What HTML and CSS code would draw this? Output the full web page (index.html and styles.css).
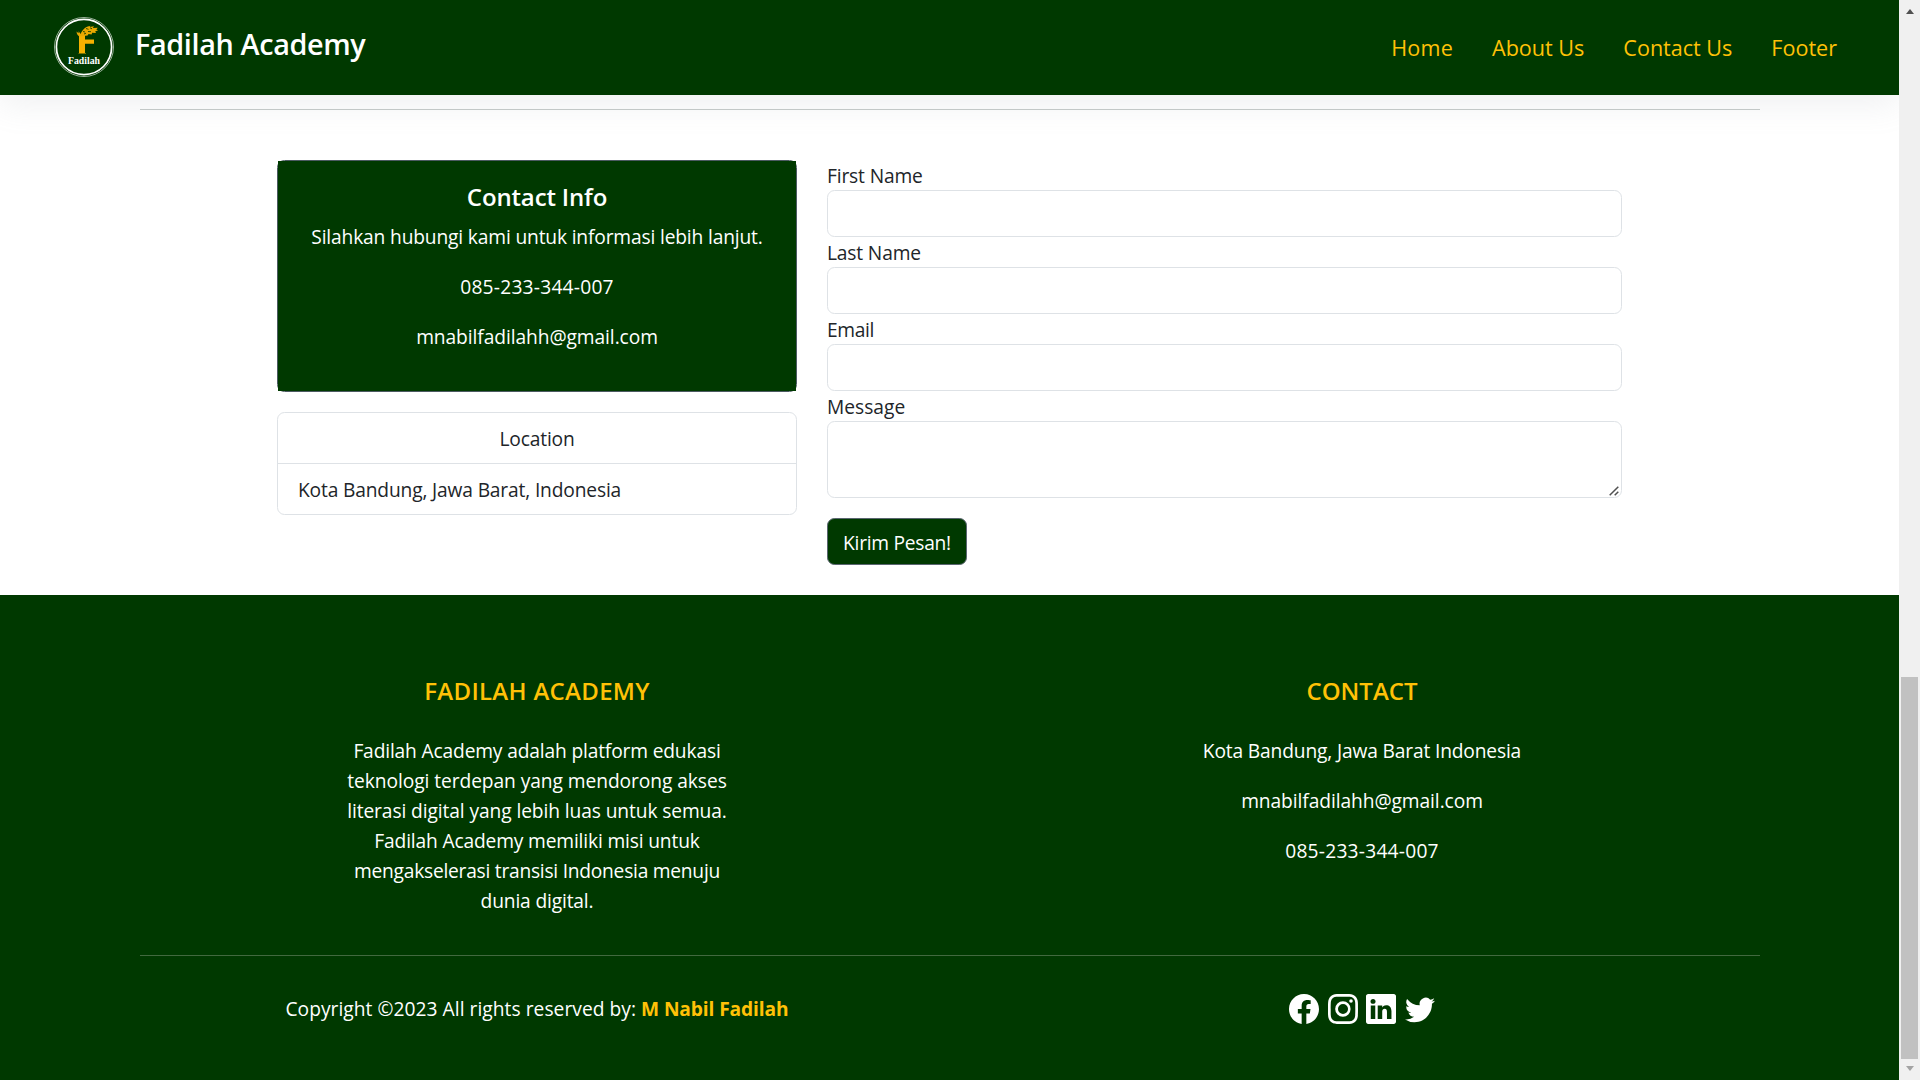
FILE: index.html
```html
<!DOCTYPE html>
<html lang="id">
<head>
<meta charset="utf-8">
<title>Fadilah Academy</title>
<link rel="stylesheet" href="styles.css">
</head>
<body>
<div class="page">
  <header class="navbar">
    <a class="brand">
      <svg class="brand-logo" viewBox="0 0 62 62" width="62" height="62">
        <circle cx="31" cy="31" r="29.500" fill="none" stroke="#fff" stroke-opacity=".6" stroke-width="1"/>
        <circle cx="31" cy="31" r="27.600" fill="none" stroke="#fff" stroke-width="1.700"/>
        <path d="M26 18.500h6v5h9v4.200h-9V37h1v.600h-7.500V37H26z" fill="#f5b000"/>
        <path d="M26.500 20.500c-1.500-1-2.800-2.300-3-5l2 1.700.200-2 1.800 2.800c2-4.500 5-7.500 10-8.300l-1 1.300 4.500-.800-1.200 1.800 5-.200-1.500 1.700 1.800.800-3 1.300 1 1.500-4-.300-.500 1.700-3-.500-1 1.600z" fill="#e9a800"/>
        <path d="M30 15.500l2 .500M33 12.500l2.500.800M37 11.800l2 1M35 15.500l3 .200M31 18l2-.800" stroke="#003900" stroke-width=".8"/>
        <text class="brand-logo-text" x="15" y="47.500" textLength="32" lengthAdjust="spacingAndGlyphs">Fadilah</text>
      </svg>
      <span class="brand-name">Fadilah Academy</span>
    </a>
    <nav class="nav">
      <a class="nav-home">Home</a><a>About Us</a><a>Contact Us</a><a>Footer</a>
    </nav>
  </header>

  <main class="contact">
    <hr class="rule">
    <div class="contact-grid">
      <div class="info">
        <section class="card card-dark">
          <div class="card-body">
            <h5 class="card-title">Contact Info</h5>
            <p>Silahkan hubungi kami untuk informasi lebih lanjut.</p>
            <p class="digits">085-233-344-007</p>
            <p class="mail">mnabilfadilahh@gmail.com</p>
          </div>
        </section>
        <ul class="card list">
          <li class="list-head">Location</li>
          <li>Kota Bandung, Jawa Barat, Indonesia</li>
        </ul>
      </div>
      <form class="form">
        <label for="first">First Name</label>
        <input id="first" type="text">
        <label for="last">Last Name</label>
        <input id="last" type="text">
        <label for="email" class="tight">Email</label>
        <input id="email" type="text">
        <label for="message" class="loose">Message</label>
        <div class="message-box">
          <textarea id="message"></textarea>
          <svg class="grip" viewBox="0 0 10 10" width="10" height="10"><path d="M.700 9.300L9.300.700M5.700 9.300L9.300 5.700" stroke="#505050" stroke-width="1.500"/></svg>
        </div>
        <button type="button">Kirim Pesan!</button>
      </form>
    </div>
  </main>

  <footer class="footer">
    <div class="footer-row footer-top">
      <div class="footer-col">
        <h5 class="wide">FADILAH ACADEMY</h5>
        <p>Fadilah Academy adalah platform edukasi<br><span class="line-2">teknologi terdepan yang mendorong akses</span><br><span class="line-3">literasi digital yang lebih luas untuk semua.</span><br>Fadilah Academy memiliki misi untuk<br><span class="line-5">mengakselerasi transisi Indonesia menuju</span><br>dunia digital.</p>
      </div>
      <div class="footer-col">
        <h5>CONTACT</h5>
        <p>Kota Bandung, Jawa Barat Indonesia</p>
        <p class="mail">mnabilfadilahh@gmail.com</p>
        <p class="digits">085-233-344-007</p>
      </div>
    </div>
    <hr class="rule rule-light">
    <div class="footer-row">
      <div class="footer-col">
        <p class="copy">Copyright ©2023 All rights reserved by: <strong>M Nabil Fadilah</strong></p>
      </div>
      <div class="footer-col social">
        <svg viewBox="0 0 16 16"><path d="M16 8.049c0-4.446-3.582-8.050-8-8.050C3.580 0-.002 3.603-.002 8.050c0 4.017 2.926 7.347 6.750 7.951v-5.625h-2.030V8.050H6.750V6.275c0-2.017 1.195-3.131 3.022-3.131.876 0 1.791.157 1.791.157v1.980h-1.009c-.993 0-1.303.621-1.303 1.258v1.510h2.218l-.354 2.326H9.250V16c3.824-.604 6.750-3.934 6.750-7.951z"/></svg>
        <svg viewBox="0 0 16 16"><path d="M8 0C5.829 0 5.556.010 4.703.048 3.850.088 3.269.222 2.760.420a3.917 3.917 0 0 0-1.417.923A3.927 3.927 0 0 0 .420 2.760C.222 3.268.087 3.850.048 4.700.010 5.555 0 5.827 0 8.001c0 2.172.010 2.444.048 3.297.040.852.174 1.433.372 1.942.205.526.478.972.923 1.417.444.445.890.719 1.416.923.510.198 1.090.333 1.942.372C5.555 15.990 5.827 16 8 16s2.444-.010 3.298-.048c.851-.040 1.434-.174 1.943-.372a3.916 3.916 0 0 0 1.416-.923c.445-.445.718-.891.923-1.417.197-.509.332-1.090.372-1.942C15.990 10.445 16 10.173 16 8s-.010-2.445-.048-3.299c-.040-.851-.175-1.433-.372-1.941a3.926 3.926 0 0 0-.923-1.417A3.911 3.911 0 0 0 13.240.420c-.510-.198-1.092-.333-1.943-.372C10.443.010 10.172 0 7.998 0h.003zm-.717 1.442h.718c2.136 0 2.389.007 3.232.046.780.035 1.204.166 1.486.275.373.145.640.319.920.599.280.280.453.546.598.920.110.281.240.705.275 1.485.039.843.047 1.096.047 3.231s-.008 2.389-.047 3.232c-.035.780-.166 1.203-.275 1.485a2.470 2.470 0 0 1-.599.919c-.280.280-.546.453-.920.598-.280.110-.704.240-1.485.276-.843.038-1.096.047-3.232.047s-2.390-.009-3.233-.047c-.780-.036-1.203-.166-1.485-.276a2.478 2.478 0 0 1-.920-.598 2.480 2.480 0 0 1-.600-.920c-.109-.281-.240-.705-.275-1.485-.038-.843-.046-1.096-.046-3.233 0-2.136.008-2.388.046-3.231.036-.780.166-1.204.276-1.486.145-.373.319-.640.599-.920.280-.280.546-.453.920-.598.282-.110.705-.240 1.485-.276.738-.034 1.024-.044 2.515-.045v.002zm4.988 1.328a.960.960 0 1 0 0 1.920.960.960 0 0 0 0-1.920zm-4.270 1.122a4.109 4.109 0 1 0 0 8.217 4.109 4.109 0 0 0 0-8.217zm0 1.441a2.667 2.667 0 1 1 0 5.334 2.667 2.667 0 0 1 0-5.334z"/></svg>
        <svg viewBox="0 0 16 16"><path d="M0 1.146C0 .513.526 0 1.175 0h13.650C15.474 0 16 .513 16 1.146v13.708c0 .633-.526 1.146-1.175 1.146H1.175C.526 16 0 15.487 0 14.854V1.146zm4.943 12.248V6.169H2.542v7.225h2.401zm-1.200-8.212c.837 0 1.358-.554 1.358-1.248-.015-.709-.520-1.248-1.342-1.248-.822 0-1.359.540-1.359 1.248 0 .694.521 1.248 1.327 1.248h.016zm4.908 8.212V9.359c0-.216.016-.432.080-.586.173-.431.568-.878 1.232-.878.869 0 1.216.662 1.216 1.634v3.865h2.401V9.250c0-2.220-1.184-3.252-2.764-3.252-1.274 0-1.845.700-2.165 1.193v.025h-.016a5.540 5.540 0 0 1 .016-.025V6.169h-2.400c.030.678 0 7.225 0 7.225h2.400z"/></svg>
        <svg viewBox="0 0 16 16"><path d="M5.026 15c6.038 0 9.341-5.003 9.341-9.334 0-.140 0-.282-.006-.422A6.685 6.685 0 0 0 16 3.542a6.658 6.658 0 0 1-1.889.518 3.301 3.301 0 0 0 1.447-1.817 6.533 6.533 0 0 1-2.087.793A3.286 3.286 0 0 0 7.875 6.030a9.325 9.325 0 0 1-6.767-3.429 3.289 3.289 0 0 0 1.018 4.382A3.323 3.323 0 0 1 .640 6.575v.045a3.288 3.288 0 0 0 2.632 3.218 3.203 3.203 0 0 1-.865.115 3.230 3.230 0 0 1-.614-.057 3.283 3.283 0 0 0 3.067 2.277A6.588 6.588 0 0 1 .780 13.580a6.320 6.320 0 0 1-.780-.045A9.344 9.344 0 0 0 5.026 15z"/></svg>
      </div>
    </div>
  </footer>
</div>
<aside class="scrollbar">
  <i class="arrow arrow-up"></i>
  <i class="thumb"></i>
  <i class="arrow arrow-down"></i>
</aside>
</body>
</html>
```

FILE: styles.css
```css
* { box-sizing: border-box; }

body {
  margin: 0;
  height: 1080px;
  overflow: hidden;
  display: flex;
  background: #fff;
  color: #212529;
  font: 19.2px/30px "Open Sans", "Noto Sans", sans-serif;
  letter-spacing: -0.155px;
}

h5, p, ul { margin: 0; padding: 0; }
hr { border: 0; margin: 0; }

.page { flex: 1; display: flex; flex-direction: column; }

/* Navbar */
.navbar {
  height: 95px;
  padding: 0 62px 0 53px;
  display: flex;
  justify-content: space-between;
  background: #003900;
  box-shadow: 0 10px 30px rgba(149, 157, 165, .14);
}
.brand { display: flex; gap: 20px; padding-top: 16px; }
.brand-logo { display: block; }
.brand-logo-text { font: bold 9.5px "Liberation Serif", serif; fill: #fff; letter-spacing: 0; }
.brand-name {
  color: #fff;
  font-size: 28.8px;
  font-weight: 600;
  line-height: 38px;
  padding-top: 9px;
  letter-spacing: -0.37px;
}
.nav {
  display: flex;
  gap: 39px;
  padding-top: 33px;
  color: #ffc107;
  font-size: 21.6px;
  letter-spacing: -0.02px;
}
.nav-home { letter-spacing: 0.2px; }

/* Contact section */
.contact { height: 500px; padding: 14px 139.5px 0; }
.rule { height: 1px; background: #c3c8c7; }
.contact-grid {
  display: grid;
  grid-template-columns: 520px 795px;
  gap: 30px;
  padding: 50px 0 0 137.5px;
}
.info { display: flex; flex-direction: column; gap: 20px; }
.card { border: 1px solid #dee2e6; border-radius: 7.5px; }
.card-dark { border-color: #4c5a62; }
.card-body {
  height: 230px;
  padding-top: 21px;
  background: #003900;
  color: #fff;
  text-align: center;
}
.card-body p { margin-bottom: 20px; }
.card-title {
  font-size: 24px;
  font-weight: 600;
  margin-bottom: 10px;
  letter-spacing: -.15px;
}
.digits { letter-spacing: .23px; }
.mail { letter-spacing: -.08px; }

.list { list-style: none; height: 103px; }
.list li { height: 50px; padding: 11px 20px 0; }
.list .list-head { height: 51px; border-bottom: 1px solid #dee2e6; text-align: center; }

.form { display: flex; flex-direction: column; align-items: flex-start; }
.form label { height: 30px; padding-top: 1px; line-height: 29px; }
.form .tight { letter-spacing: -.35px; }
.form .loose { letter-spacing: 0; }
.form input, .form textarea {
  display: block;
  width: 100%;
  height: 47px;
  margin: 0;
  border: 1px solid #dee2e6;
  border-radius: 7.5px;
  background: #fff;
}
.form textarea { height: 77px; resize: none; }
.message-box { position: relative; width: 100%; }
.grip { position: absolute; right: 3px; bottom: 2px; }
.form button {
  width: 140px;
  height: 47px;
  margin-top: 20px;
  padding: 2px 0 0;
  border: 1px solid #5a6570;
  border-radius: 7.5px;
  background: #003900;
  color: #fff;
  font: inherit;
  letter-spacing: -.26px;
}

/* Footer */
.footer { flex: 1; padding: 81px 139.5px 0; background: #003900; color: #fff; }
.footer-row { display: grid; grid-template-columns: 825px 825px; margin: 0 -15px; text-align: center; }
.footer-top { height: 279px; }
.footer h5 { margin-bottom: 30px; color: #ffc107; font-size: 24px; font-weight: 600; letter-spacing: 0; }
.footer .wide { letter-spacing: .3px; }
.footer-col p { margin-bottom: 20px; }
.line-2 { letter-spacing: -.07px; }
.line-3 { letter-spacing: -.1px; }
.line-5 { letter-spacing: -.245px; }
.rule-light { background: #42693f; margin-bottom: 38px; }
.footer-col .copy { letter-spacing: .04px; }
.copy strong { color: #ffc107; letter-spacing: -.12px; }
.social { display: flex; justify-content: center; gap: 8.8px; }
.social svg { width: 30px; height: 30px; fill: #fff; }

/* Window scrollbar */
.scrollbar {
  width: 21px;
  display: flex;
  flex-direction: column;
  align-items: center;
  background: #f0f0f0;
}
.arrow { border: 5px solid transparent; border-width: 0 4.5px; }
.arrow-up { margin: 9px 0 663px; border-bottom: 5px solid #505050; }
.thumb { width: 17px; height: 382px; background: #c1c1c1; }
.arrow-down { margin-top: 7px; border-top: 5px solid #a3a3a3; }
```
